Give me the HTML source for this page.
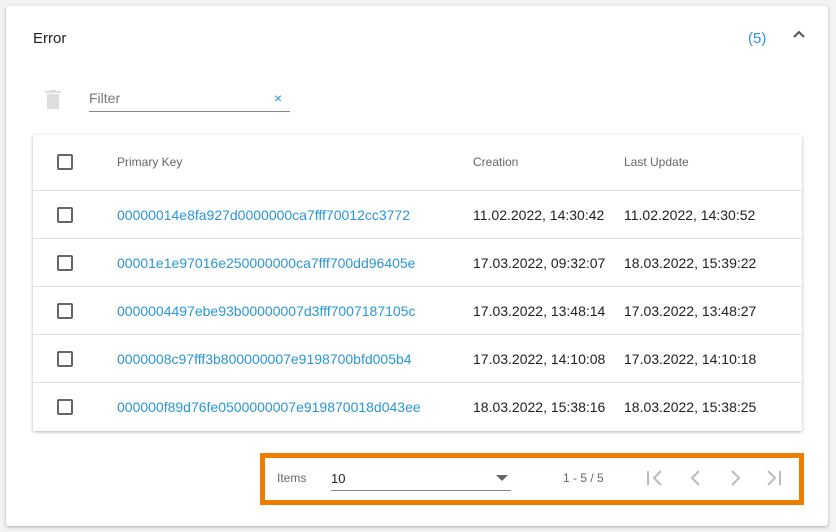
<!DOCTYPE html><html><head><style>
*{box-sizing:border-box;margin:0;padding:0}
body{width:836px;height:532px;background:#f3f3f3;font-family:"Liberation Sans",sans-serif;position:relative;overflow:hidden}
.card{position:absolute;left:6px;top:6px;width:822px;height:520px;background:#fff;box-shadow:0 1px 3px rgba(0,0,0,.3);border-radius:3px}
.abs{position:absolute}
.tbl{position:absolute;left:33px;top:135px;width:769px;height:296px;background:#fff;box-shadow:0 1px 3px rgba(0,0,0,.3)}
.row{position:absolute;left:0;width:769px;height:48px;border-top:1px solid #e0e0e0;font-size:14px;color:#212121}
.cb{position:absolute;left:24px;width:16px;height:16px;border:2px solid #666;border-radius:2px}
.pk{position:absolute;left:84px;color:#2a96d4}
.c2{position:absolute;left:440px}.c3{position:absolute;left:591px}
</style></head><body>
<div class="card"></div>
<div class="abs" style="left:33px;top:30px;font-size:15px;color:#212121">Error</div>
<div class="abs" style="left:748px;top:30px;font-size:15px;color:#2a96d4">(5)</div>
<svg class="abs" style="left:792px;top:28px" width="14" height="14" viewBox="0 0 14 14"><path d="M2 9 L7 4 L12 9" fill="none" stroke="#555" stroke-width="2"/></svg>
<svg class="abs" style="left:45px;top:90px" width="16" height="19" viewBox="0 0 16 19"><rect x="0" y="1" width="16" height="2" fill="#ddd"/><rect x="5" y="0" width="6" height="2" fill="#ddd"/><rect x="2" y="4" width="12" height="15" fill="#ddd"/></svg>
<div class="abs" style="left:89px;top:90px;font-size:14px;color:#777">Filter</div>
<div class="abs" style="left:274px;top:90px;font-size:14px;color:#2a96d4">×</div>
<div class="abs" style="left:89px;top:111px;width:201px;height:1px;background:#888"></div>
<div class="tbl">
<div class="cb" style="top:19px"></div>
<div class="abs" style="left:84px;top:20px;font-size:12px;color:#666">Primary Key</div>
<div class="abs" style="left:440px;top:20px;font-size:12px;color:#666">Creation</div>
<div class="abs" style="left:591px;top:20px;font-size:12px;color:#666">Last Update</div>
<div class="row" style="top:55px"><div class="cb" style="top:16px"></div><div class="pk" style="top:16px">00000014e8fa927d0000000ca7fff70012cc3772</div><div class="c2" style="top:16px">11.02.2022, 14:30:42</div><div class="c3" style="top:16px">11.02.2022, 14:30:52</div></div>
<div class="row" style="top:103px"><div class="cb" style="top:16px"></div><div class="pk" style="top:16px">00001e1e97016e250000000ca7fff700dd96405e</div><div class="c2" style="top:16px">17.03.2022, 09:32:07</div><div class="c3" style="top:16px">18.03.2022, 15:39:22</div></div>
<div class="row" style="top:151px"><div class="cb" style="top:16px"></div><div class="pk" style="top:16px">0000004497ebe93b00000007d3fff7007187105c</div><div class="c2" style="top:16px">17.03.2022, 13:48:14</div><div class="c3" style="top:16px">17.03.2022, 13:48:27</div></div>
<div class="row" style="top:199px"><div class="cb" style="top:16px"></div><div class="pk" style="top:16px">0000008c97fff3b800000007e9198700bfd005b4</div><div class="c2" style="top:16px">17.03.2022, 14:10:08</div><div class="c3" style="top:16px">17.03.2022, 14:10:18</div></div>
<div class="row" style="top:247px"><div class="cb" style="top:16px"></div><div class="pk" style="top:16px">000000f89d76fe0500000007e919870018d043ee</div><div class="c2" style="top:16px">18.03.2022, 15:38:16</div><div class="c3" style="top:16px">18.03.2022, 15:38:25</div></div>
</div>
<div class="abs" style="left:260px;top:453px;width:544px;height:52px;border:5px solid #ef7d00"></div>
<div class="abs" style="left:277px;top:471px;font-size:12px;color:#666">Items</div>
<div class="abs" style="left:331px;top:471px;font-size:13px;color:#212121">10</div>
<svg class="abs" style="left:496px;top:475px" width="12" height="6"><path d="M0 0 L12 0 L6 6Z" fill="#666"/></svg>
<div class="abs" style="left:331px;top:490px;width:180px;height:1px;background:#888"></div>
<div class="abs" style="left:563px;top:471px;font-size:12px;color:#666">1 - 5 / 5</div>
<svg class="abs" style="left:645px;top:469px" width="145" height="18" viewBox="0 0 145 18" fill="none" stroke="#bbb" stroke-width="2"><path d="M3 2 V16 M16 2 L9 9 L16 16"/><path d="M54 2 L47 9 L54 16"/><path d="M87 2 L94 9 L87 16"/><path d="M123 2 L130 9 L123 16 M135 2 V16"/></svg>
</body></html>
